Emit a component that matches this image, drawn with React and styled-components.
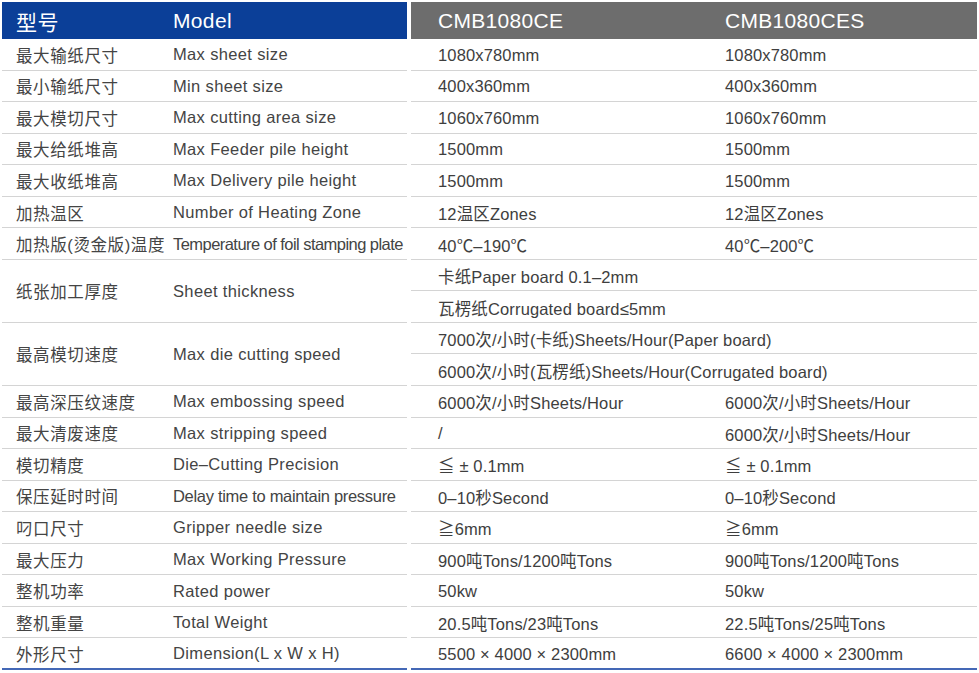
import React from 'react';
import styled, { createGlobalStyle } from 'styled-components';

const GlobalStyle = createGlobalStyle`
	html, body {
		margin: 0;
		padding: 0;
		background: #ffffff;
	}
	body {
		font-family: "Liberation Sans", "Noto Sans CJK SC", sans-serif;
		color: #3c3c3c;
	}
`;

const UNIT = 31.55;

const specs = [
	{ zh: '最大输纸尺寸', en: 'Max sheet size', a: '1080x780mm', b: '1080x780mm' },
	{ zh: '最小输纸尺寸', en: 'Min sheet size', a: '400x360mm', b: '400x360mm' },
	{ zh: '最大模切尺寸', en: 'Max cutting area size', a: '1060x760mm', b: '1060x760mm' },
	{ zh: '最大给纸堆高', en: 'Max Feeder pile height', a: '1500mm', b: '1500mm' },
	{ zh: '最大收纸堆高', en: 'Max Delivery pile height', a: '1500mm', b: '1500mm' },
	{ zh: '加热温区', en: 'Number of Heating Zone', a: '12温区Zones', b: '12温区Zones' },
	{ zh: '加热版(烫金版)温度', en: 'Temperature of foil stamping plate', a: '40℃–190℃', b: '40℃–200℃', spacing: -0.55 },
	{ zh: '纸张加工厚度', en: 'Sheet thickness', lines: ['卡纸Paper board 0.1–2mm', '瓦楞纸Corrugated board≤5mm'] },
	{ zh: '最高模切速度', en: 'Max die cutting speed', lines: ['7000次/小时(卡纸)Sheets/Hour(Paper board)', '6000次/小时(瓦楞纸)Sheets/Hour(Corrugated board)'] },
	{ zh: '最高深压纹速度', en: 'Max embossing speed', a: '6000次/小时Sheets/Hour', b: '6000次/小时Sheets/Hour' },
	{ zh: '最大清废速度', en: 'Max stripping speed', a: '/', b: '6000次/小时Sheets/Hour' },
	{ zh: '模切精度', en: 'Die–Cutting Precision', a: '≦ ± 0.1mm', b: '≦ ± 0.1mm' },
	{ zh: '保压延时时间', en: 'Delay time to maintain pressure', a: '0–10秒Second', b: '0–10秒Second', spacing: -0.3 },
	{ zh: '叼口尺寸', en: 'Gripper needle size', a: '≧6mm', b: '≧6mm' },
	{ zh: '最大压力', en: 'Max Working Pressure', a: '900吨Tons/1200吨Tons', b: '900吨Tons/1200吨Tons' },
	{ zh: '整机功率', en: 'Rated power', a: '50kw', b: '50kw' },
	{ zh: '整机重量', en: 'Total Weight', a: '20.5吨Tons/23吨Tons', b: '22.5吨Tons/25吨Tons' },
	{ zh: '外形尺寸', en: 'Dimension(L x W x H)', a: '5500 × 4000 × 2300mm', b: '6600 × 4000 × 2300mm' },
];

const Sheet = styled.div`
	padding: 2px 2px 0 2px;
	width: 975px;
`;

const Row = styled.div`
	display: grid;
	grid-template-columns: 405px 566px;
	column-gap: 4px;
`;

const HeadLeft = styled.div`
	display: flex;
	align-items: center;
	height: 37px;
	background: #0b3f98;
	color: #ffffff;
	font-size: 21px;
`;

const HeadRight = styled.div`
	display: grid;
	grid-template-columns: 287px 1fr;
	align-items: center;
	height: 37px;
	padding-left: 27px;
	background: #6d6d6d;
	color: #ffffff;
	font-size: 21px;
	letter-spacing: 0.3px;
`;

const LabelZh = styled.span`
	width: 171px;
	padding-left: 14px;
	box-sizing: border-box;
	flex-shrink: 0;
	white-space: nowrap;
	letter-spacing: 0.6px;
`;

const LabelEn = styled.span`
	white-space: nowrap;
	letter-spacing: ${p => (p.$spacing != null ? p.$spacing : 0.35)}px;
`;

const NameCell = styled.div`
	display: flex;
	align-items: center;
	height: ${p => p.$span * UNIT}px;
	box-sizing: border-box;
	padding-top: 1px;
	border-bottom: ${p => (p.$last ? '2px solid #4468b6' : '1px solid #d4d4d4')};
	font-size: 16.5px;
	color: #444444;
	overflow: hidden;
`;

const ValueStack = styled.div`
	display: flex;
	flex-direction: column;
`;

const ValueLine = styled.div`
	display: grid;
	grid-template-columns: 287px 1fr;
	align-items: center;
	height: ${UNIT}px;
	box-sizing: border-box;
	padding: 2px 0 0 27px;
	border-bottom: ${p => (p.$last ? '2px solid #4468b6' : '1px solid #d4d4d4')};
	font-size: 16.5px;
	letter-spacing: 0.15px;
	color: #3e3e3e;
	white-space: nowrap;
`;

const Wide = styled.span`
	grid-column: 1 / span 2;
`;

export default function App() {
	return (
		<>
			<GlobalStyle />
			<Sheet>
				<Row>
					<HeadLeft>
						<LabelZh>型号</LabelZh>
						<LabelEn>Model</LabelEn>
					</HeadLeft>
					<HeadRight>
						<span>CMB1080CE</span>
						<span>CMB1080CES</span>
					</HeadRight>
				</Row>
				{specs.map((s, i) => {
					const last = i === specs.length - 1;
					const span = s.lines ? s.lines.length : 1;
					return (
						<Row key={s.zh}>
							<NameCell $span={span} $last={last}>
								<LabelZh>{s.zh}</LabelZh>
								<LabelEn $spacing={s.spacing}>{s.en}</LabelEn>
							</NameCell>
							<ValueStack>
								{s.lines ? (
									s.lines.map(l => (
										<ValueLine key={l}>
											<Wide>{l}</Wide>
										</ValueLine>
									))
								) : (
									<ValueLine $last={last}>
										<span>{s.a}</span>
										<span>{s.b}</span>
									</ValueLine>
								)}
							</ValueStack>
						</Row>
					);
				})}
			</Sheet>
		</>
	);
}
